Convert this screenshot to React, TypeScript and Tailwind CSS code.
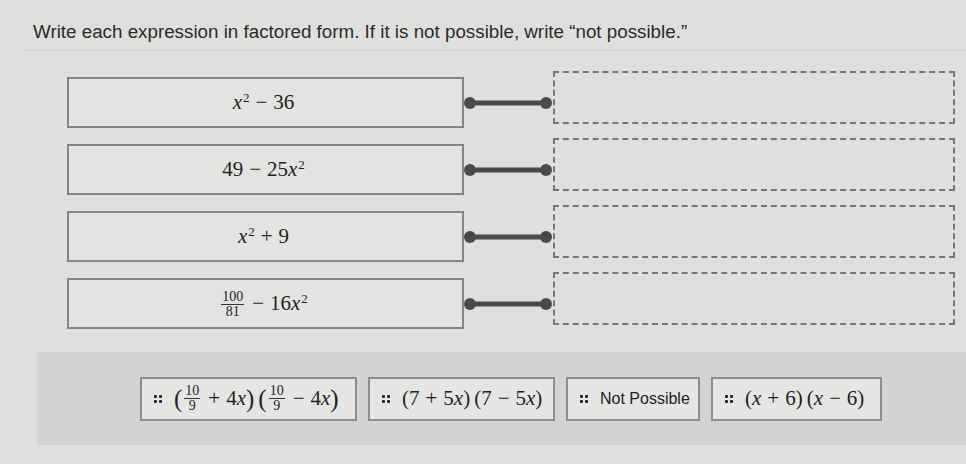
import React from "react";

const serif = "font-['Liberation_Serif','DejaVu_Serif',serif]";

function X() {
  return <i className="italic">x</i>;
}

function Op({ c }: { c: string }) {
  return <span className="mx-[6px]">{c}</span>;
}

function Sq() {
  return <sup className="text-[13px] ml-[1px]">2</sup>;
}

function Frac({ n, d }: { n: string; d: string }) {
  return (
    <span className="inline-flex flex-col items-center align-middle mx-[2px] text-[14px] leading-[14px]">
      <span className="border-b border-[#333] px-[1px]">{n}</span>
      <span>{d}</span>
    </span>
  );
}

function Grip() {
  return (
    <span className="inline-grid grid-cols-2 gap-[2px] mr-3 shrink-0">
      <span className="w-[3px] h-[3px] bg-[#222] rounded-[1px]" />
      <span className="w-[3px] h-[3px] bg-[#222] rounded-[1px]" />
      <span className="w-[3px] h-[3px] bg-[#222] rounded-[1px]" />
      <span className="w-[3px] h-[3px] bg-[#222] rounded-[1px]" />
    </span>
  );
}

function Connector() {
  return (
    <svg width="89" height="20" viewBox="0 0 89 20" className="shrink-0">
      <line x1="6" y1="10" x2="82" y2="10" stroke="#4a4a4a" strokeWidth="5" />
      <circle cx="6" cy="10" r="6" fill="#4a4a4a" />
      <circle cx="82" cy="10" r="6" fill="#4a4a4a" />
    </svg>
  );
}

const prompts: React.ReactNode[] = [
  <>
    <X />
    <Sq />
    <Op c="−" />
    36
  </>,
  <>
    49
    <Op c="−" />
    25<X />
    <Sq />
  </>,
  <>
    <X />
    <Sq />
    <Op c="+" />
    9
  </>,
  <>
    <Frac n="100" d="81" />
    <Op c="−" />
    16<X />
    <Sq />
  </>,
];

function Chip({ children, className = "" }: { children: React.ReactNode; className?: string }) {
  return (
    <div
      className={`h-[44px] flex items-center whitespace-nowrap pl-[12px] pr-1 border-2 border-[#8d8e8b] bg-[#e5e6e3] text-[21px] text-[#222] ${className}`}
    >
      <Grip />
      {children}
    </div>
  );
}

export default function App() {
  return (
    <main className="w-[966px] h-[464px] bg-[#dfe0dd] overflow-hidden relative">
      <p className="pl-[33px] pt-[20px] text-[18.8px] text-[#2b2b2b] font-['Liberation_Sans',Arial,sans-serif] leading-[24px]">
        Write each expression in factored form. If it is not possible, write “not possible.”
      </p>
      <div className="ml-[23px] mt-[6px] h-px bg-[#cfd0cd]" />

      <div className="flex flex-col gap-[10px] mt-[20px]">
        {prompts.map((p, i) => (
          <div key={i} className="flex items-start">
            <div className="flex items-center mt-[6px] ml-[67px]">
              <div
                className={`w-[397px] h-[51px] border-2 border-[#858683] bg-[#e3e4e1] flex items-center justify-center text-[21px] text-[#222] ${serif}`}
              >
                <span className="-ml-[4px]">{p}</span>
              </div>
              <Connector />
            </div>
            <div className="w-[402px] h-[53px] border-2 border-dashed border-[#777875]" />
          </div>
        ))}
      </div>

      <div className="absolute left-[37px] right-0 top-[352px] h-[93px] bg-[#d3d4d1] flex items-center gap-[11px] pl-[103px]">
        <Chip className={`w-[217px] ${serif}`}>
          <span className="text-[25px] font-light">(</span>
          <Frac n="10" d="9" />
          <Op c="+" />4<X />
          <span className="text-[25px] font-light">)</span>
          <span className="text-[25px] font-light ml-1">(</span>
          <Frac n="10" d="9" />
          <Op c="−" />4<X />
          <span className="text-[25px] font-light">)</span>
        </Chip>
        <Chip className={`w-[187px] ${serif}`}>
          (7<Op c="+" />5<X />)<span className="ml-1">(7</span>
          <Op c="−" />5<X />)
        </Chip>
        <Chip className="w-[134px] font-['Liberation_Sans',Arial,sans-serif] !text-[16px]">Not Possible</Chip>
        <Chip className={`w-[171px] ${serif}`}>
          (<X />
          <Op c="+" />6)<span className="ml-1">(</span>
          <X />
          <Op c="−" />6)
        </Chip>
      </div>
    </main>
  );
}
